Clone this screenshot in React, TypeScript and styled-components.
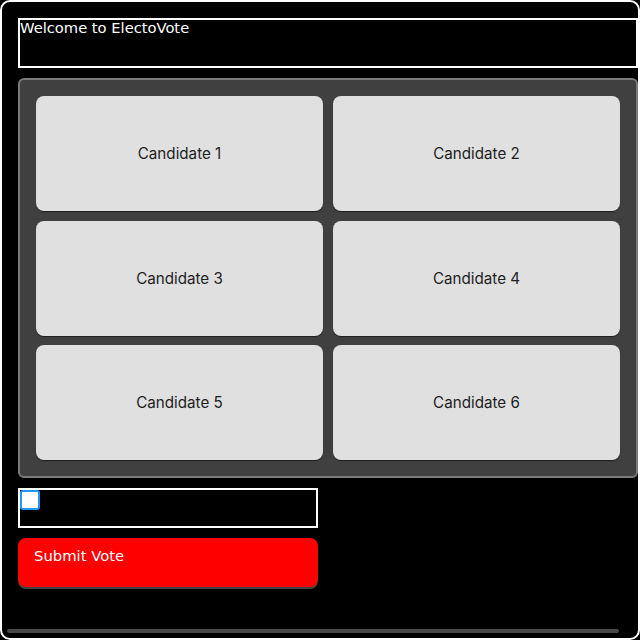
import React, { useState } from "react";
import styled, { createGlobalStyle } from "styled-components";

const GlobalStyle = createGlobalStyle`
  html, body {
    margin: 0;
    padding: 0;
    background: #000;
  }
  * {
    box-sizing: border-box;
  }
`;

const Frame = styled.div`
  position: relative;
  width: 640px;
  height: 640px;
  background: #000;
  border: 2px solid #fff;
  border-radius: 10px;
  padding: 16px;
  color: #fff;
  font-family: "DejaVu Sans", Verdana, sans-serif;
  font-size: 14.7px;
  overflow: hidden;
`;

const Header = styled.div`
  width: 620px;
  height: 50px;
  border: 2px solid #fff;
  line-height: 16px;
`;

const Board = styled.div`
  width: 620px;
  margin-top: 10px;
  background: #404040;
  border: 2px solid #7a7a7a;
  border-radius: 6px;
  padding: 16px;
  display: grid;
  grid-template-columns: 1fr 1fr;
  gap: 9.5px 10px;
`;

const Card = styled.button`
  height: 115px;
  border: none;
  border-radius: 8px;
  background: #e0e0e0;
  box-shadow: 0 1px 1px rgba(0, 0, 0, 0.55);
  color: #1e1e1e;
  font-family: Inter, "Noto Sans", sans-serif;
  font-size: 15.2px;
  display: flex;
  align-items: center;
  justify-content: center;
  padding: 0;
  cursor: pointer;
`;

const ConsentBox = styled.label`
  display: block;
  width: 300px;
  height: 40px;
  margin-top: 10px;
  border: 2px solid #fff;
`;

const Check = styled.input`
  appearance: none;
  display: block;
  margin: 0;
  width: 20px;
  height: 20px;
  background: #fff;
  border: 2px solid #2196f3;
  border-radius: 3px;
`;

const Submit = styled.button`
  width: 300px;
  height: 49px;
  margin-top: 10px;
  padding: 10px 16px;
  border: none;
  border-radius: 8px;
  background: #ff0000;
  box-shadow: 0 2px 0 #444;
  color: #fff;
  font-family: "DejaVu Sans", Verdana, sans-serif;
  font-size: 14.8px;
  line-height: 16px;
  cursor: pointer;
  display: flex;
  align-items: flex-start;
`;

const ScrollThumb = styled.div`
  position: absolute;
  left: 5px;
  bottom: 5px;
  width: 612px;
  height: 4px;
  border-radius: 2px;
  background: #474747;
`;

const candidates = [1, 2, 3, 4, 5, 6].map((n) => `Candidate ${n}`);

export default function App() {
  const [agree, setAgree] = useState(false);
  return (
    <>
      <GlobalStyle />
      <Frame>
        <Header>Welcome to ElectoVote</Header>
        <Board>
          {candidates.map((c) => (
            <Card key={c}>{c}</Card>
          ))}
        </Board>
        <ConsentBox>
          <Check type="checkbox" checked={agree} onChange={(e) => setAgree(e.target.checked)} />
        </ConsentBox>
        <Submit>Submit Vote</Submit>
        <ScrollThumb />
      </Frame>
    </>
  );
}
